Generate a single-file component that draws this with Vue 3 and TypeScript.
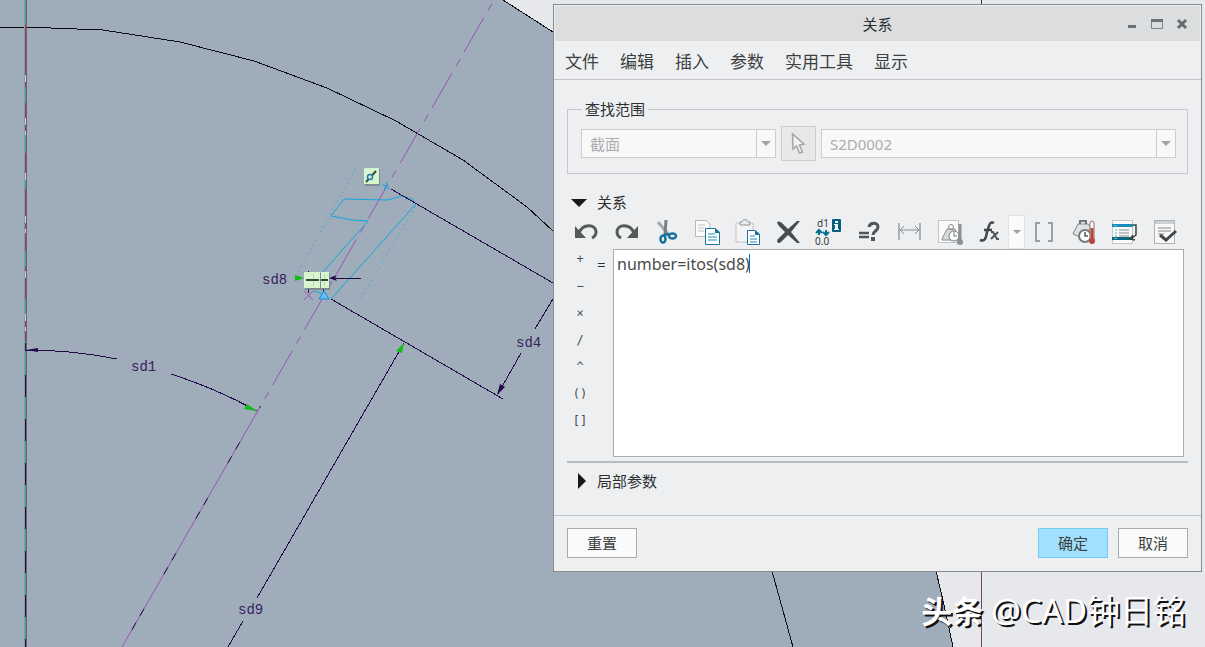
<script setup lang="ts">
import { computed, nextTick, onMounted, ref, watch } from 'vue'

const menus = ['文件', '编辑', '插入', '参数', '实用工具', '显示']
const operators = ['+', '−', '×', '/', '^', '()', '[]']
const relation = ref('number=itos(sd8)')
const editor = ref<HTMLTextAreaElement | null>(null)
const relationsOpen = ref(true)
const localOpen = ref(false)
const caretX = ref(0)

function placeCaret() {
  const el = editor.value
  const ctx = document.createElement('canvas').getContext('2d')
  if (!el || !ctx) return
  const style = getComputedStyle(el)
  ctx.font = `${style.fontSize} ${style.fontFamily}`
  caretX.value = Math.round(parseFloat(style.paddingLeft) + ctx.measureText(relation.value).width)
}
const caretStyle = computed(() => ({ left: `${caretX.value}px` }))

function insert(op: string) {
  relation.value += op
}

onMounted(placeCaret)
watch(relation, () => nextTick(placeCaret))
</script>

<template>
  <main class="workspace">
    <svg class="model" aria-label="草绘">
      <polygon points="0,0 503,0 553,32 936,571 953,647 953,2000 0,2000" fill="#9fadbb" />
      <g fill="none" stroke="#0c0c16" shape-rendering="crispEdges">
        <path d="M503 0L553 32M936 571L944 605 953 647" />
        <path d="M0 28L25 27 103 30 180 42 254 61 327 88 396 121 463 160 527 207 553 231M772 571L793 647" />
      </g>
      <path d="M981.5 0V5" stroke="#333347" />
      <path d="M981.5 571V2000" stroke="#7d4453" />
      <g fill="none" shape-rendering="crispEdges">
        <path d="M24.5 0V2000" stroke="#6fa5ae" />
        <path d="M25.5 0V2000" stroke="#3fa09f" />
        <path d="M26.5 0V2000" stroke="#805a65" />
        <path d="M25.5 25V345" stroke="#98404a" stroke-dasharray="62 16 32 18 24 12" />
        <path d="M25.5 75V345" stroke="#d8cfc5" stroke-dasharray="7 36 7 6 4 38" />
        <path d="M25.5 343V351" stroke="#2b0945" />
        <path d="M25.5 375V2000" stroke="#2b0945" stroke-dasharray="22 22" />
      </g>

      <g fill="none" stroke="#a04fba">
        <path d="M122 647L260.6 406" />
        <path d="M260.6 406L494 0" stroke-dasharray="40 8 8 8" stroke-dashoffset="40" />
        <path d="M304 291L313 300M313 291L304 300" />
      </g>
      <path d="M260.6 406L122 647" fill="none" stroke="#220a44" stroke-dasharray="8 8 8 40" stroke-dashoffset="22" />
      <g fill="none" stroke="#12a6dc">
        <path d="M323 272L368 221 352 220 331 216 344 199 388 200 402 196 412 199 416 204 331 299" />
        <path d="M355 170L298 272M415 207L355 308" stroke-dasharray="1 4" />
        <path d="M314 291L324 294M382 184L390 189M387 182L384 191" />
      </g>
      <g fill="none" stroke="#24084c" shape-rendering="crispEdges">
        <path d="M391 189L553 283M331 299L503 399" />
        <path d="M553 299L535 329M521 353L498 394" />
        <path d="M404 343L257 598M243 621L228 647" />
        <path d="M26 350Q73 350 117 359M171 374Q215 388 257 411" />
        <path d="M331 278H361M308 271V275M308 289V293M323 289V293" />
      </g>
      <g fill="#24084c">
        <path d="M26 350L38 348V352ZM497 395L500 384 505 387ZM329 278L337 275 335 278 337 281Z" />
      </g>
      <g fill="#0fbd12">
        <path d="M257 411L244 409 247 404ZM404 343L402 353 396 351ZM295 275L304 278 295 281Z" />
      </g>
      <path d="M324 291L319 299H329Z" fill="#69bdf0" stroke="#158de0" />
      <g fill="#596b73" opacity=".5">
        <rect x="365" y="169" width="15" height="17" /><rect x="305" y="273" width="25" height="17" />
      </g>
      <g fill="#d8f5ce">
        <rect x="364" y="168" width="15" height="16" /><rect x="304" y="272" width="16" height="16" />
        <rect x="321" y="272" width="8" height="16" />
      </g>
      <path d="M313.5 274V286M324.5 274V286" stroke="#b9d8b3" />
      <path d="M306 280H319M321 280H328" stroke="#33493a" stroke-width="2" />
      <path d="M366 182L376 171" stroke="#315342" stroke-width="2" />
      <circle cx="370" cy="177" r="2.5" fill="#d8f5ce" stroke="#207aad" stroke-width="1.500" />
      <g class="dimension">
        <text x="131" y="371">sd1</text><text x="262" y="284">sd8</text>
        <text x="516" y="347">sd4</text><text x="238" y="614">sd9</text>
      </g>
    </svg>

    <div class="watermark"><strong>头条</strong><span>@CAD钟日铭</span></div>

    <section class="dialog" role="dialog" aria-labelledby="dialog-title">
      <header class="titlebar">
        <h1 id="dialog-title">关系</h1>
        <div class="window-buttons">
          <button type="button" aria-label="最小化"><svg width="12" height="12"><path d="M2 7H10V10H2Z" fill="#6b7072" /></svg></button>
          <button type="button" aria-label="最大化"><svg width="12" height="12"><path d="M.5 1.500H11.500V10.500H.5Z" fill="none" stroke="#7e8486" /><path d="M0 1H12V4H0Z" fill="#6e7476" /></svg></button>
          <button type="button" aria-label="关闭"><svg width="12" height="12"><path d="M2 2L10 10M10 2L2 10" stroke="#66696b" stroke-width="3" /></svg></button>
        </div>
      </header>
      <nav class="menubar"><button v-for="m in menus" :key="m" type="button">{{ m }}</button></nav>

      <div class="body">
        <fieldset class="scope">
          <legend>查找范围</legend>
          <div class="scope-row">
            <div class="combo type">
              <select aria-label="对象类型" disabled><option>截面</option></select>
              <span class="drop"><svg width="10" height="5"><path d="M0 0H10L5 5Z" fill="#a2a5a6" /></svg></span>
            </div>
            <button class="pick" type="button" aria-label="选择对象" disabled>
              <svg width="16" height="24"><path d="M2.500 2L3 17 6.500 14 9.500 21 12.500 20 9.500 13 14 12Z" fill="#f1f2f2" stroke="#a2a4a6" stroke-width="1.500" /></svg>
            </button>
            <div class="combo object">
              <select aria-label="对象名称" disabled><option>S2D0002</option></select>
              <span class="drop"><svg width="10" height="5"><path d="M0 0H10L5 5Z" fill="#a2a5a6" /></svg></span>
            </div>
          </div>
        </fieldset>

        <button class="section-head" type="button" :aria-expanded="relationsOpen" @click="relationsOpen = !relationsOpen">
          <svg width="16" height="16"><path d="M0 5H16L8 13Z" fill="#17191a" /></svg>关系
        </button>

        <div v-show="relationsOpen">
          <div class="toolbar">
            <button type="button" aria-label="撤消"><svg viewBox="0 0 28 28"><path d="M7 15C11 5 24 6 24 14C24 17 22 19 20 20" fill="none" stroke="#55595a" stroke-width="3" /><path d="M3 8V20H14Z" fill="#55595a" /></svg></button>
            <button type="button" aria-label="重做"><svg viewBox="0 0 28 28"><path d="M21 15C17 5 4 6 4 14C4 17 6 19 8 20" fill="none" stroke="#55595a" stroke-width="3" /><path d="M25 8V20H14Z" fill="#55595a" /></svg></button>
            <button type="button" aria-label="剪切"><svg viewBox="0 0 28 28"><path d="M5 4L16 17" stroke="#a4a9ac" stroke-width="3" /><path d="M13 2L12 17" stroke="#797e81" stroke-width="3" /><g fill="none" stroke="#13739c" stroke-width="2.500"><ellipse cx="10" cy="21" rx="2.500" ry="3.500" /><ellipse cx="19.500" cy="18" rx="3.500" ry="2.500" /><path d="M11 17L16 16" /></g></svg></button>
            <button type="button" aria-label="复制"><svg viewBox="0 0 28 28"><path d="M1.500 2.500H12L16 6V18.500H1.500Z" fill="#fafafa" stroke="#b3b7b9" /><path d="M4 7H11M4 10H10M4 13H10" stroke="#c2c5c6" /><path d="M11.500 10.500H21L25.500 14V26.500H11.500Z" fill="#fff" stroke="#1c7197" /><path d="M21 10V15H26Z" fill="#1c7197" /><path d="M14 16H21M14 19H23M14 22H23" stroke="#218ab6" /></svg></button>
            <button type="button" aria-label="粘贴"><svg viewBox="0 0 28 28"><path d="M2 5H19V24H2Z" fill="#f3f4f4" stroke="#bfc2c4" /><path d="M6 7V4H8C8 1 14 1 14 4H16V7Z" fill="#e8eaeb" stroke="#92979a" /><path d="M13.500 12.500H21L25.500 16V26.500H13.500Z" fill="#fff" stroke="#1c7197" /><path d="M21 12V17H26Z" fill="#1c7197" /><path d="M16 18H21M16 21H23M16 24H23" stroke="#218ab6" /></svg></button>
            <button type="button" aria-label="删除"><svg viewBox="0 0 28 28"><path d="M2 5C3 2 6 4 8 6L13 11 22 3 25 3 16 14 25 25 22 25 13 17 6 24C3 27 1 23 3 21L10 14 4 8Z" fill="#484c4e" /></svg></button>
            <button type="button" aria-label="切换尺寸"><svg viewBox="0 0 28 28"><g class="dim-icon"><text x="2" y="9">d1</text><text x="0" y="27">0.0</text></g><path d="M4 12V17M1 15L4 12 7 15M11 12V17M8 14L11 17 14 14" fill="none" stroke="#087192" stroke-width="2" /><rect x="17" y="1" width="9" height="13" rx="1" fill="#075f7e" /><path d="M20 3H23V5H20ZM19 6H23V11H24V12H19V11H20V7H19Z" fill="#fff" /></svg></button>
            <button type="button" aria-label="计算值"><svg viewBox="0 0 28 28"><path d="M3 15H13M3 19H13" stroke="#515557" stroke-width="2.500" /><path d="M13 9C14 4 22 4 22 9C22 13 17 13 17 17" fill="none" stroke="#515557" stroke-width="3" /><rect x="15" y="19" width="4" height="4" fill="#515557" /></svg></button>
            <button type="button" aria-label="显示尺寸"><svg viewBox="0 0 28 28"><path d="M3 5V22M24 5V22" stroke="#adb1b3" stroke-width="2" /><path d="M4 12H23M8 8L4 12 8 16M19 8L23 12 19 16" fill="none" stroke="#898e90" /></svg></button>
            <button type="button" aria-label="测量"><svg viewBox="0 0 28 28"><rect x="1.500" y="2.500" width="20" height="22" fill="#fbfbfb" stroke="#bfc3c5" /><path d="M5 21L10 11H18L21 22H5Z" fill="#d8dadb" stroke="#888d90" /><circle cx="14" cy="9" r="2.500" fill="none" stroke="#888d90" /><circle cx="17" cy="18" r="5" fill="#fff" stroke="#777c7f" /><path d="M17 14V18H20" fill="none" stroke="#777c7f" /><path d="M23 6V24" stroke="#8a8f92" stroke-width="3" /><circle cx="23" cy="24" r="3" fill="#8a8f92" /></svg></button>
            <div class="fx">
              <button type="button" aria-label="插入函数"><svg viewBox="0 0 28 28"><path d="M3 22C8 24 9 20 10 14L12 8C13 4 15 4 17 5M7 12H15" fill="none" stroke="#424648" stroke-width="2.500" /><path d="M14 14H16L20 21H22M21 14L14 21" fill="none" stroke="#515557" stroke-width="2" /></svg></button>
              <button class="fx-drop" type="button" aria-label="函数列表"><svg width="8" height="4"><path d="M0 0H8L4 4Z" fill="#9da1a2" /></svg></button>
            </div>
            <button type="button" aria-label="插入参数"><svg viewBox="0 0 28 28"><path d="M11 5H7V23H11M19 5H23V23H19" fill="none" stroke="#9da1a3" stroke-width="2" /></svg></button>
            <button type="button" aria-label="单位"><svg viewBox="0 0 28 28"><path d="M4 16L9 6H19L22 10 11 19Z" fill="#e0e3e4" stroke="#85898b" /><path d="M11 6V3H17V6" fill="none" stroke="#707476" stroke-width="2" /><circle cx="16" cy="18" r="6" fill="#fff" stroke="#777b7e" stroke-width="2" /><path d="M16 14V18H19" fill="none" stroke="#55595b" stroke-width="1.500" /><rect x="21" y="3" width="4" height="20" rx="2" fill="#fff" stroke="#8f6a65" /><path d="M23 10V23" stroke="#b8443a" stroke-width="3" /><circle cx="23" cy="23" r="3" fill="#b8443a" /></svg></button>
            <button type="button" aria-label="排序"><svg viewBox="0 0 28 28"><rect x="2.500" y="2.500" width="20" height="23" fill="#fafafa" stroke="#c3c6c7" /><path d="M2 7.500H23" stroke="#168eb9" stroke-width="3" /><path d="M2 20.500H23" stroke="#096b83" stroke-width="3" /><path d="M9 12H19M9 15H19M9 18H19" stroke="#888d90" /><path d="M5 12H7M5 15H7M5 18H7M4 7.500H7M4 20.500H7" stroke="#63b4d1" /><path d="M23 7H26V17L21 21M25 22L20 21 23 17" fill="none" stroke="#3f4346" stroke-width="1.500" /></svg></button>
            <button type="button" aria-label="校验"><svg viewBox="0 0 28 28"><rect x="4.500" y="2.500" width="20" height="23" fill="#f8f8f8" stroke="#aeb3b5" /><path d="M5 4.500H24" stroke="#cbd0d2" stroke-width="3" /><path d="M8 10H21M8 13H21M8 16H14" stroke="#84898c" /><path d="M10 17L16 22 26 13" fill="none" stroke="#424648" stroke-width="3" /></svg></button>
          </div>

          <div class="edit-area">
            <div class="operators"><button v-for="op in operators" :key="op" type="button" @click="insert(op)">{{ op }}</button></div>
            <span class="equals">=</span>
            <div class="editor">
              <textarea ref="editor" v-model="relation" aria-label="关系内容" spellcheck="false"></textarea>
              <i class="caret" :style="caretStyle"></i>
            </div>
          </div>
        </div>
        <div class="splitter"></div>
        <button class="section-head local" type="button" :aria-expanded="localOpen" @click="localOpen = !localOpen">
          <svg width="16" height="16"><path d="M7 0V16L15 8Z" fill="#17191a" /></svg>局部参数
        </button>
      </div>

      <footer class="actions">
        <button type="button">重置</button>
        <span class="spacer"></span>
        <button class="primary" type="button">确定</button>
        <button type="button">取消</button>
      </footer>
    </section>
  </main>
</template>

<style>
body { margin: 0; }
</style>

<style scoped>
* { box-sizing: border-box; }
.workspace {
  position: relative;
  min-height: 100vh;
  overflow: hidden;
  background: #e7e8eb;
  font-family: "Noto Sans", "Noto Sans CJK SC", sans-serif;
  font-weight: 400;
  color: #2c3032;
}
button { font: inherit; color: inherit; padding: 0; border: 0; background: none; }
svg { display: block; overflow: visible; }
.model { position: absolute; inset: 0; width: 100%; height: 100%; }
.dimension { font: 14px "Liberation Mono", monospace; fill: #3a1d60; }
.watermark {
  position: absolute;
  right: 19px;
  bottom: 12px;
  display: flex;
  gap: 8px;
  align-items: center;
  font-size: 33px;
  line-height: 48px;
  color: #fff;
  text-shadow: 2px 2px 0 #111;
}
.watermark strong { font-size: 31px; font-weight: 700; }
.dialog {
  position: absolute;
  top: 4px;
  left: 553px;
  right: 3px;
  display: flex;
  flex-direction: column;
  border: 1px solid #858b8f;
  background: #eeeff1;
}
.titlebar {
  position: relative;
  display: flex;
  align-items: center;
  justify-content: flex-end;
  height: 35px;
  margin: 1px 1px 0;
  padding-right: 12px;
  background: #dbddde;
}
.titlebar h1 { position: absolute; left: 0; right: 0; margin: 0; text-align: center; font-size: 15px; line-height: 36px; font-weight: 400; pointer-events: none; }
.window-buttons { display: flex; gap: 13px; }
.menubar { display: flex; gap: 21px; height: 39px; padding: 0 11px; border-bottom: 1px solid #c1c3c7; font-size: 17px; color: #3b3f41; }
.body { padding: 20px 13px 0; }
.scope { height: 74px; margin: 0; padding: 0 11px 0 13px; border: 1px solid #c5c7ca; }
.scope legend { margin-left: 1px; padding: 0 3px; font-size: 15px; line-height: 18px; }
.scope-row { display: flex; align-items: center; gap: 5px; margin-top: 8px; }
.combo { display: flex; height: 29px; border: 1px solid #cbcdd0; background: #f8f8f8; }
.combo.type { flex: 194 1 0; }
.combo.object { flex: 355 1 0; }
.combo select { flex: 1; min-width: 0; appearance: none; border: 0; padding: 0 8px; background: transparent; font: inherit; font-size: 15px; color: #abadae; opacity: 1; }
.drop { display: flex; align-items: center; justify-content: center; width: 19px; border-left: 1px solid #cbcdd0; }
.pick { display: flex; align-items: center; justify-content: center; width: 35px; height: 35px; border: 1px solid #cbcdcf; background: #e6e8ea; }
.section-head { display: flex; align-items: center; gap: 10px; height: 24px; margin: 16px 0 0 4px; font-size: 15px; line-height: 20px; }
.toolbar { display: flex; align-items: center; justify-content: space-between; height: 35px; padding: 0 10px 0 5px; }
.toolbar button { width: 28px; height: 28px; }
.fx { display: flex; align-items: center; gap: 3px; margin-right: -9px; }
.toolbar .fx-drop { display: flex; align-items: center; justify-content: center; width: 17px; height: 34px; border: 1px solid #e0e2e3; background: #fafafa; }
.dim-icon { font: 10px "Noto Sans", sans-serif; fill: #33383a; }
.edit-area { display: flex; padding-right: 4px; }
.operators { display: flex; flex-direction: column; width: 26px; color: #4b4f51; }
.operators button { height: 27px; font: 12px/20px "DejaVu Sans Mono", monospace; display: flex; justify-content: center; }
.equals { width: 20px; padding-left: 4px; font-size: 15px; line-height: 30px; }
.editor { position: relative; flex: 1; height: 208px; }
textarea { display: block; width: 100%; height: 100%; padding: 3px; resize: none; outline: 0; border: 1px solid #a9adb0; border-radius: 0; background: #fff; color: #4b4b4b; font: 16px/22px "Noto Sans", "Noto Sans CJK SC", sans-serif; caret-color: transparent; }
.caret { position: absolute; top: 5px; width: 1px; height: 19px; background: #0070c0; }
.splitter { height: 6px; border-bottom: 2px solid #b8bcc1; }
.section-head.local { height: 36px; margin-top: 0; }
.actions { display: flex; gap: 10px; margin-top: 16px; padding: 12px 13px 13px; border-top: 1px solid #bec2c7; }
.actions button { width: 70px; height: 30px; padding-bottom: 2px; border: 1px solid #a9acaf; background: #fafafa; font-size: 15px; color: #3b3f41; }
.actions .primary { border-color: #79cbed; background: #a1e0ff; }
.spacer { flex: 1; }
</style>
